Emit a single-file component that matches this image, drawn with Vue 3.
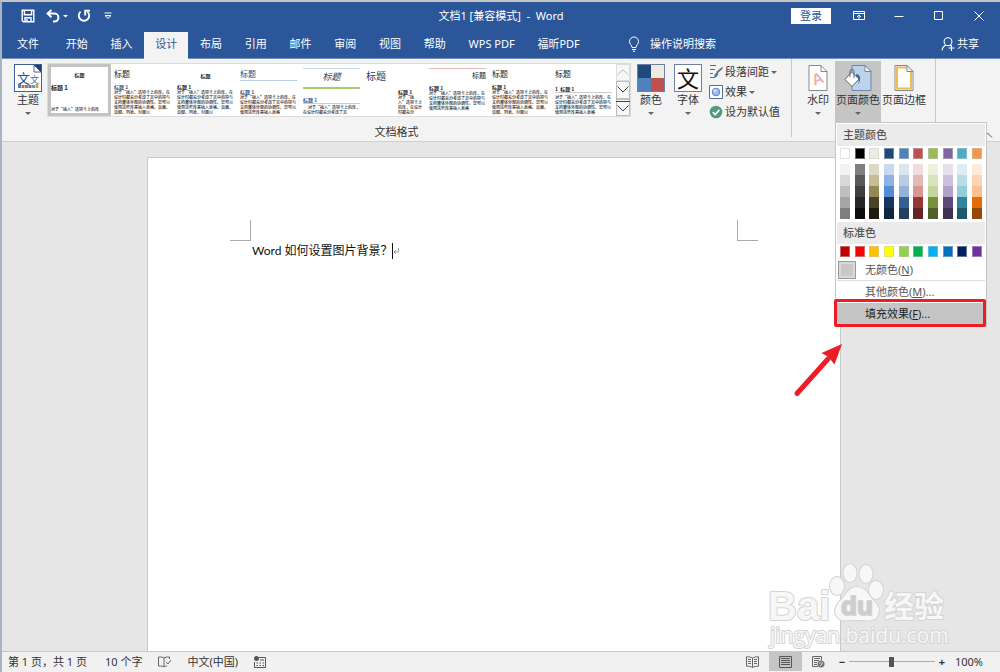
<script setup>
import { ref } from 'vue'

const tabs = ['文件', '开始', '插入', '设计', '布局', '引用', '邮件', '审阅', '视图', '帮助', 'WPS PDF', '福昕PDF']
const activeTab = ref('设计')
const zoom = ref(50)

const sample = '对于“插入”选项卡上的库，在设计时都充分考虑了其中的项与文档整体外观的协调性。您可以使用这些库来插入表格、页眉、页脚、列表、封面以及其他文档构建基块。'

// Document styles shown in the gallery, length is how much of the sample fits
const formats = [
  { name: 'current', heading: '标题 1', length: 12 },
  { name: 'office', heading: '标题 1', length: 65 },
  { name: 'classic', heading: '标题 1', length: 65 },
  { name: 'lines', heading: '标题 1', length: 52 },
  { name: 'centered', heading: '标题 1', length: 24 },
  { name: 'casual', heading: '标题 1', length: 20 },
  { name: 'minimal', heading: '标题 1', length: 52 },
  { name: 'plain', heading: '标题 1', length: 65 },
  { name: 'numbered', heading: '1  标题 1', length: 52 }
]

// Theme colors: base color first, then the five shades
const themeColors = [
  { base: '#ffffff', shades: ['#f2f2f2', '#d8d8d8', '#bfbfbf', '#a5a5a5', '#7f7f7f'] },
  { base: '#000000', shades: ['#7f7f7f', '#595959', '#3f3f3f', '#262626', '#0c0c0c'] },
  { base: '#eeece1', shades: ['#ddd9c3', '#c4bd97', '#938953', '#494429', '#1d1b10'] },
  { base: '#1f497d', shades: ['#c6d9f0', '#8db3e2', '#548dd4', '#17365d', '#0f243e'] },
  { base: '#4f81bd', shades: ['#dbe5f1', '#b8cce4', '#95b3d7', '#366092', '#244061'] },
  { base: '#c0504d', shades: ['#f2dcdb', '#e5b9b7', '#d99694', '#953734', '#632423'] },
  { base: '#9bbb59', shades: ['#ebf1dd', '#d7e3bc', '#c3d69b', '#76923c', '#4f6128'] },
  { base: '#8064a2', shades: ['#e5e0ec', '#ccc1d9', '#b2a2c7', '#5f497a', '#3f3151'] },
  { base: '#4bacc6', shades: ['#dbeef3', '#b7dde8', '#92cddc', '#31859b', '#205867'] },
  { base: '#f79646', shades: ['#fdeada', '#fbd5b5', '#fac08f', '#e36c09', '#974806'] }
]

const standardColors = ['#c00000', '#ff0000', '#ffc000', '#ffff00', '#92d050', '#00b050', '#00b0f0', '#0070c0', '#002060', '#7030a0']
</script>

<template>
  <div class="window">
    <header class="top">
      <div class="titlebar">
        <div class="quick">
          <button class="q-save" aria-label="保存">
            <svg width="14" height="14" viewBox="0 0 14 14" fill="none" stroke="#fff" stroke-width="1.4">
              <path d="M1.2 1.2h11.6v11.6H2.4L1.2 11.6z" />
              <path d="M3.4 1.5v4.2h7.2V1.5M4 12.6V8.8h6v3.8" />
              <path d="M6 10v2.6" />
            </svg>
          </button>
          <button class="q-undo" aria-label="撤消">
            <svg width="22" height="14" viewBox="0 0 22 14" fill="none" stroke="#fff" stroke-width="2">
              <path d="M5.4 1L1.6 4.6l3.8 3.6M2 4.6h6.400a4 4 0 0 1 0 8H7" />
              <path d="M17 6h5l-2.500 2.600z" fill="#fff" stroke="none" />
            </svg>
          </button>
          <button class="q-redo" aria-label="重复">
            <svg width="14" height="14" viewBox="0 0 14 14" fill="none" stroke="#fff" stroke-width="1.9">
              <path d="M3.6 2.6a5.2 5.2 0 1 0 6.8 0" />
              <path d="M8.200 6.400V1.600h4.800" />
            </svg>
          </button>
          <button class="q-more" aria-label="自定义快速访问工具栏">
            <svg width="8" height="8" viewBox="0 0 8 8" fill="none" stroke="#fff" stroke-width="1">
              <path d="M.5 1h7M1 3.600l3 2.800 3-2.800z" />
            </svg>
          </button>
        </div>
        <h1 class="title">文档1 [兼容模式]&nbsp; -&nbsp; Word</h1>
        <div class="controls">
          <button class="login">登录</button>
          <button class="control" aria-label="功能区显示选项">
            <svg width="12" height="10" viewBox="0 0 12 10" fill="none" stroke="#fff">
              <path d="M.5.5h11v8H.5zM.5 2.500h11M6 8V4M4 6l2-2 2 2" />
            </svg>
          </button>
          <button class="control" aria-label="最小化">
            <svg width="10" height="10" viewBox="0 0 10 10" stroke="#fff"><path d="M.5 5.500h9" /></svg>
          </button>
          <button class="control" aria-label="最大化">
            <svg width="10" height="10" viewBox="0 0 10 10" fill="none" stroke="#fff"><path d="M.5.5h8v8h-8z" /></svg>
          </button>
          <button class="control" aria-label="关闭">
            <svg width="10" height="10" viewBox="0 0 10 10" stroke="#fff"><path d="M.5.5l9 9M9.500.5l-9 9" /></svg>
          </button>
        </div>
      </div>
      <div class="tabbar">
        <nav class="tabs">
          <button
            v-for="tab in tabs"
            :key="tab"
            class="tab"
            :class="{ active: tab === activeTab }"
            @click="activeTab = tab"
          >{{ tab }}</button>
        </nav>
        <button class="tell-me">
          <svg width="12" height="16" viewBox="0 0 12 16" fill="none" stroke="#fff">
            <path d="M4 11.500C4 9 1.500 8.500 1.500 5.500a4.500 4.500 0 0 1 9 0C10.500 8.500 8 9 8 11.500z" />
            <path d="M4 13.500h4M5 15.300h2" />
          </svg>
          操作说明搜索
        </button>
        <button class="share">
          <svg width="14" height="14" viewBox="0 0 14 14" fill="none" stroke="#fff" stroke-width="1.1">
            <circle cx="7" cy="4.700" r="3.900" />
            <path d="M1 13.500c.3-3 1.700-4.500 4-5.300M9 8.200l1 .8M7.500 11h6M10.500 8v6" />
          </svg>
          共享
        </button>
      </div>
    </header>

    <section class="ribbon">
      <div class="group format-group">
        <div class="row">
          <button class="big theme">
            <span class="box theme-icon">
              <svg width="26" height="26" viewBox="0 0 26 26">
                <path d="M19 0h7v7z" fill="#1f3f7a" />
                <path d="M19 0v7h7z" fill="#fff" stroke="#1f3f7a" stroke-width=".8" />
                <text x="2" y="18" class="theme-a">文</text>
                <text x="15" y="18" class="theme-b">文</text>
                <path d="M3 19h3v4H3z" fill="#4f81bd" />
                <path d="M6.500 20h3v3h-3z" fill="#e0632a" />
                <path d="M10 20h3v3h-3z" fill="#68a04a" />
                <path d="M13.500 20h3v3h-3z" fill="#8b5ba8" />
                <path d="M17 20h3v3h-3z" fill="#4bacc6" />
                <path d="M20.500 19h3v4h-3z" fill="#e89a3a" />
              </svg>
            </span>
            <span>主题</span>
            <i class="caret"></i>
          </button>
          <div class="gallery">
            <button v-for="f in formats" :key="f.name" class="thumb" :class="f.name">
              <span class="preview">
                <span class="t-title">标题</span>
                <span class="t-heading">{{ f.heading }}</span>
                <span class="t-body">{{ sample.slice(0, f.length) }}</span>
              </span>
            </button>
            <div class="scroller">
              <button class="dim" aria-label="上一行">
                <svg width="12" height="7" viewBox="0 0 12 7" fill="none" stroke="#b8b8b8"><path d="M.5 6L6 .8 11.500 6" /></svg>
              </button>
              <button aria-label="下一行">
                <svg width="12" height="7" viewBox="0 0 12 7" fill="none" stroke="#444"><path d="M.5.5L6 6 11.500.5" /></svg>
              </button>
              <button aria-label="其他">
                <svg width="14" height="12" viewBox="0 0 14 12" fill="none" stroke="#444"><path d="M0 .5h14M1.500 4.500L7 10l5.500-5.500" /></svg>
              </button>
            </div>
          </div>
          <button class="big colors">
            <span class="box color-icon"><b></b><b></b><b></b><b></b></span>
            <span>颜色</span>
            <i class="caret"></i>
          </button>
          <button class="big fonts">
            <span class="box font-icon">文</span>
            <span>字体</span>
            <i class="caret"></i>
          </button>
          <div class="options">
            <button>
              <svg width="14" height="14" viewBox="0 0 14 14" fill="none">
                <path d="M1 .5h6M1 4.500h5M1 8.500h3M1 12.500h4" stroke="#666" />
                <path d="M13.500 1.500v2.500L8.500 8.500 7 7z" fill="#777" />
                <path d="M8.500 7.500c1.500 1.500.5 4-4 6 1-1 .5-2 1-3.500s1.500-2.500 3-2.500z" fill="#3f7ab8" />
              </svg>
              段落间距<i class="caret"></i>
            </button>
            <button>
              <svg width="14" height="14" viewBox="0 0 14 14">
                <path d="M.5.5h13v13H.5z" fill="#fff" stroke="#536c9c" />
                <circle cx="7" cy="7" r="3.800" fill="#9dbdf0" stroke="#5a83c8" />
                <circle cx="6" cy="5.500" r="1.600" fill="#d3e2fb" />
              </svg>
              效果<i class="caret"></i>
            </button>
            <button>
              <svg width="14" height="14" viewBox="0 0 14 14" fill="none">
                <circle cx="7" cy="7" r="6.300" fill="#4f9a80" />
                <path d="M3.800 7.200l2.400 2.300 4.200-4.700" stroke="#fff" stroke-width="1.800" />
              </svg>
              设为默认值
            </button>
          </div>
        </div>
        <div class="group-label">文档格式</div>
      </div>

      <div class="group page-group">
        <button class="big watermark-button">
          <span class="box bare">
            <svg width="20" height="26" viewBox="0 0 20 26" fill="none">
              <path d="M1 .5h12l6 6v19H1z" fill="#fff" stroke="#888" />
              <path d="M13 .5v6h6" stroke="#888" />
              <text x="4" y="19" transform="rotate(-20 10 14)" class="mark-a">A</text>
            </svg>
          </span>
          <span>水印</span>
          <i class="caret"></i>
        </button>
        <div class="page-color">
          <button class="big pressed">
            <span class="box bare">
              <svg width="28" height="26" viewBox="0 0 28 26" fill="none">
                <path d="M8 .5h13l6 6v19H8z" fill="#bdd3ec" stroke="#6f87a6" />
                <path d="M21 .5v6h6z" fill="#fff" stroke="#6f87a6" />
                <path d="M12 9c4.500 0 5.500 5 2.500 10 .5-4-.5-6-2.500-7z" fill="#3b73b5" />
                <path d="M7.500 7L15 14l-7 7.500L1 14.500z" fill="#fff" stroke="#666" />
                <path d="M6 12V6.500a2 2 0 0 1 4 0V13" stroke="#666" />
              </svg>
            </span>
            <span>页面颜色</span>
            <i class="caret"></i>
          </button>

          <div class="menu">
            <h2>主题颜色</h2>
            <div class="swatches bases">
              <button
                v-for="c in themeColors"
                :key="c.base"
                :aria-label="c.base"
                :style="{ backgroundColor: c.base }"
              ></button>
            </div>
            <div class="swatches shades">
              <div v-for="c in themeColors" :key="c.base" class="shade-column">
                <button v-for="s in c.shades" :key="s" :aria-label="s" :style="{ backgroundColor: s }"></button>
              </div>
            </div>
            <h2>标准色</h2>
            <div class="swatches standard">
              <button v-for="c in standardColors" :key="c" :aria-label="c" :style="{ backgroundColor: c }"></button>
            </div>
            <button class="item none"><i class="none-box"></i>无颜色(<u>N</u>)</button>
            <button class="item">其他颜色(<u>M</u>)...</button>
            <button class="item fill">填充效果(<u>F</u>)...</button>
            <div class="callout"></div>
            <svg class="arrow" width="50" height="56" viewBox="0 0 50 56">
              <path d="M4 51.500L35 17" stroke="#ee1c25" stroke-width="5" stroke-linecap="round" />
              <path d="M49 2L28.500 11 35.500 15 41.500 22.500z" fill="#ee1c25" />
            </svg>
          </div>
        </div>
        <button class="big">
          <span class="box bare">
            <svg width="20" height="26" viewBox="0 0 20 26" fill="none">
              <path d="M1 .5h12l6 6v19H1z" fill="#fff" stroke="#888" />
              <path d="M3 2.500h9.500l4.500 5v16H3z" stroke="#f0b95c" stroke-width="2" />
              <path d="M13 .5v6h6z" fill="#fff" stroke="#888" />
            </svg>
          </span>
          <span>页面边框</span>
        </button>
      </div>
      <button class="collapse" aria-label="折叠功能区">
        <svg width="10" height="8" viewBox="0 0 10 8" fill="none" stroke="#555"><path d="M0 6.500L4.500 2 9 6.500" /></svg>
      </button>
    </section>

    <main class="workspace">
      <article class="page">
        <div class="corners"><i class="corner left"></i><i class="corner right"></i></div>
        <p class="line">Word 如何设置图片背景？<i class="cursor"></i><svg width="6" height="8" viewBox="0 0 6 8" fill="none" stroke="#888" stroke-width=".8"><path d="M5.500 1v4H1M3 3L1 5l2 2" /></svg></p>
      </article>
      <svg class="logo" width="184" height="86" viewBox="0 0 184 86">
        <g class="shape">
          <ellipse cx="71" cy="23" rx="7" ry="9" />
          <ellipse cx="84" cy="10" rx="6.500" ry="9" />
          <ellipse cx="100" cy="11" rx="6.500" ry="9" />
          <ellipse cx="110" cy="27" rx="7" ry="9" />
          <path d="M91 24c8 0 11 7 16 13 6 6 8 11 4 17-4 5-11 3-20 3s-17 2-20-3c-4-6-1-12 4-17 5-5 8-13 16-13z" />
        </g>
        <text x="2" y="57" class="logo-bai">Bai</text>
        <text x="75" y="52" class="logo-du">du</text>
        <text x="118" y="54" class="logo-cn">经验</text>
        <text x="4" y="80" class="logo-url">jingyan.baidu.com</text>
      </svg>
    </main>

    <footer class="status">
      <span class="s-page">第 1 页，共 1 页</span>
      <span class="s-words">10 个字</span>
      <svg class="s-proof" width="13" height="12" viewBox="0 0 13 12" fill="none" stroke="#666">
        <path d="M6 2v9M6 2C5 1 3 1 .5 1v9c2.500 0 4.500 0 5.500 1 1-1 2-1 3-1M6 2c1-1 3-1 5.500-1v2M8 6l2 2 3-4" />
      </svg>
      <span class="s-lang">中文(中国)</span>
      <svg class="s-macro" width="12" height="12" viewBox="0 0 12 12" fill="none" stroke="#555">
        <path d="M5 1.500h6.500v10H.5V6M2.500 7h1.500M5.500 7h1.500M8.500 7h1.500M2.500 9.500h1.500M5.500 9.500h1.500M8.500 9.500h1.500M6 4h4" />
        <circle cx="2.500" cy="2.500" r="2.500" fill="#555" stroke="none" />
      </svg>
      <div class="views">
        <button aria-label="阅读视图">
          <svg width="13" height="12" viewBox="0 0 13 12" fill="none" stroke="#666">
            <path d="M6.500 2v9.500M6.500 2C5 1 3 .8.5.8v9.400c2.500 0 4.500.3 6 1.300 1.500-1 3.500-1.300 6-1.300V.8c-2.500 0-4.500.2-6 1.200M2 3.500h3M2 5.500h3M2 7.500h3M8 3.500h3M8 5.500h3M8 7.500h3" />
          </svg>
        </button>
        <button class="on" aria-label="页面视图">
          <svg width="13" height="12" viewBox="0 0 13 12" fill="none" stroke="#555">
            <path d="M.5.5h12v11H.5zM2 2.500h9M2 4.500h9M2 6.500h9M2 8.500h9" />
          </svg>
        </button>
        <button aria-label="Web 版式视图">
          <svg width="13" height="12" viewBox="0 0 13 12" fill="none" stroke="#666">
            <path d="M6 10.500H.5V.5h9v4M2 2.500h6M2 4.500h5M2 6.500h3M2 8.500h3" />
            <circle cx="9" cy="8" r="3.500" fill="#777" stroke="none" />
            <path d="M7 7c2-1 2 1 4 0M8 10l2-2" stroke="#eee" stroke-width=".8" />
          </svg>
        </button>
      </div>
      <div class="zoom">
        <button aria-label="缩小">−</button>
        <input v-model="zoom" type="range" min="0" max="100" aria-label="显示比例" />
        <button aria-label="放大">+</button>
        <span>100%</span>
      </div>
    </footer>
  </div>
</template>

<style>
body {
  margin: 0;
}
</style>

<style scoped>
.window {
  display: flex;
  flex-direction: column;
  box-sizing: border-box;
  min-height: 100vh;
  border-top: 2px solid #c4c4c4;
  border-left: 2px solid #a9b3c2;
  background: #e6e6e6;
  color: #333;
  font-family: "Noto Sans", "Noto Sans CJK SC", sans-serif;
  font-size: 11px;
  line-height: 16px;
}

button {
  margin: 0;
  padding: 0;
  border: 0;
  background: none;
  color: inherit;
  font: inherit;
  white-space: nowrap;
}

svg {
  display: block;
  flex: none;
}

/* Title bar and tabs */
.top {
  background: #2b579a;
  color: #fff;
}

.titlebar {
  display: grid;
  grid-template-columns: 1fr auto 1fr;
  align-items: center;
  height: 28px;
}

.quick {
  display: flex;
  align-items: center;
  gap: 9px;
  padding-left: 19px;
}

.q-undo {
  margin-left: 2px;
}

.q-more {
  margin-left: 4px;
}

.title {
  margin: 0;
  font-size: 11px;
  font-weight: 400;
}

.controls {
  display: flex;
  justify-content: flex-end;
  align-items: center;
  padding-right: 1px;
}

.login {
  width: 40px;
  margin-right: 8px;
  background: #fff;
  color: #2b579a;
}

.control {
  display: flex;
  justify-content: center;
  width: 40px;
}

.tabbar {
  display: flex;
  align-items: stretch;
  height: 28px;
  padding-left: 4px;
  border-bottom: 1px solid #7592c0;
}

.tabs {
  display: flex;
  justify-content: space-between;
  width: 585px;
}

.tab {
  height: 27px;
  margin-top: 2px;
  padding: 0 11px 4px;
}

.tab:first-child {
  margin-right: 4px;
}

.tab.active {
  height: 28px;
  padding-bottom: 5px;
  background: #f3f3f3;
  color: #2b579a;
}

.tell-me,
.share {
  display: flex;
  align-items: center;
  gap: 10px;
  margin-left: 37px;
}

.share {
  gap: 2px;
  margin-left: auto;
  margin-right: 21px;
}

/* Ribbon */
.ribbon {
  display: flex;
  height: 82px;
  border-bottom: 1px solid #d0d0d0;
  background: #f3f3f3;
}

.group {
  display: flex;
  box-sizing: border-box;
  padding-top: 2px;
}

.format-group {
  flex-direction: column;
  width: 790px;
  height: 78px;
  border-right: 1px solid #c6c6c6;
}

.row {
  display: flex;
}

.big {
  display: flex;
  flex-direction: column;
  align-items: center;
  box-sizing: border-box;
  height: 61px;
  padding-top: 3px;
}

.box {
  display: flex;
  justify-content: center;
  align-items: center;
  box-sizing: border-box;
  width: 28px;
  height: 28px;
  border: 1px solid #6d7fa3;
  background: #fff;
}

.box.bare {
  border: 0;
  background: none;
}

.caret {
  width: 0;
  margin-top: 4px;
  border: 3px solid transparent;
  border-top: 3px solid #666;
  border-bottom: 0;
}

.theme {
  width: 28px;
  margin-left: 12px;
  margin-right: 5px;
}

.theme-icon {
  border: 1px solid #3f5e96;
}

.theme-a {
  fill: #2b4f8f;
  font-size: 13px;
}

.theme-b {
  fill: #3b6fb5;
  font-size: 9px;
}

.mark-a {
  fill: #eeb3a8;
  font: 700 16px "Liberation Sans", sans-serif;
}

.gallery {
  display: flex;
  box-sizing: border-box;
  width: 584px;
  height: 54px;
  margin-top: 2px;
  border: 1px solid #dcdcdc;
  background: #fff;
}

.thumb {
  box-sizing: border-box;
  width: 63px;
  height: 52px;
  padding: 4px 3px 0;
  color: #222;
  font-family: "Noto Sans CJK SC", sans-serif;
  text-align: left;
  white-space: normal;
}

.thumb.current {
  padding: 0;
  border: 3px solid #c3c3c3;
}

.preview {
  display: block;
  height: 48px;
}

.current .preview {
  height: 46px;
}

.t-title,
.t-heading,
.t-body {
  display: block;
}

.t-title {
  font-size: 8px;
  line-height: 12px;
}

.t-heading {
  margin-top: 4px;
  font-size: 5px;
  font-weight: 700;
  line-height: 6px;
  white-space: pre;
}

.t-body {
  font-size: 4px;
  font-weight: 500;
  line-height: 5px;
}

.current .t-title,
.classic .t-title {
  font-size: 5px;
  font-weight: 700;
  line-height: 16px;
  text-align: center;
}

.current .t-heading {
  margin-top: 0;
  margin-bottom: 14px;
  font-size: 6px;
  line-height: 10px;
}

.classic .t-heading {
  margin-top: 0;
}

.office .t-heading,
.lines .t-heading,
.centered .t-heading {
  color: #345a8a;
}

.lines .t-title {
  border-bottom: 1px solid #b9d0ea;
  color: #1f497d;
}

.lines .t-heading {
  margin-top: 8px;
}

.centered .t-title {
  padding: 1px 0 3px;
  border-top: 1px solid #c5d8ec;
  border-bottom: 2px solid #a6cc6a;
  color: #1f3f66;
  font-size: 9px;
  font-style: italic;
  line-height: 14px;
  text-align: center;
}

.centered .t-heading {
  margin-top: 8px;
  border-bottom: 1px solid #b9d0ea;
}

.centered .t-body {
  padding-top: 1px;
  text-indent: 5px;
}

.casual .t-title {
  color: #1f3f66;
  font-size: 10px;
  line-height: 16px;
}

.casual .t-heading {
  margin-top: 5px;
  margin-left: 32px;
}

.casual .t-body {
  margin-left: 32px;
}

.minimal .t-title {
  border-top: 1px solid #eab8b4;
  font-size: 7px;
  text-align: right;
}

.numbered .t-heading {
  margin-top: 6px;
  margin-bottom: 2px;
  border-bottom: 1px solid #ccc;
}

.scroller {
  display: flex;
  flex-direction: column;
  width: 14px;
  margin-left: auto;
}

.scroller button {
  display: flex;
  flex: 1;
  justify-content: center;
  align-items: center;
  border: 1px solid #bdbdbd;
  background: #f7f7f7;
}

.scroller .dim {
  border-color: #dedede;
}

.colors,
.fonts {
  width: 28px;
  margin-left: 6px;
}

.fonts {
  margin-left: 9px;
}

.color-icon {
  display: grid;
  grid-template-columns: 1fr 1fr;
  grid-template-rows: 1fr 1fr;
  place-items: stretch;
}

.color-icon b:nth-child(1) {
  background: #1f497d;
}

.color-icon b:nth-child(2) {
  background: #eeece1;
}

.color-icon b:nth-child(3) {
  background: #4f81bd;
}

.color-icon b:nth-child(4) {
  background: #c0504d;
}

.font-icon {
  color: #111;
  font-size: 22px;
  line-height: 24px;
}

.options {
  display: flex;
  flex-direction: column;
  margin-top: 1px;
  margin-left: 7px;
}

.options button {
  display: flex;
  align-items: center;
  gap: 2px;
  height: 20px;
}

.options .caret {
  margin-top: 0;
}

.group-label {
  margin-top: 2px;
  text-align: center;
}

.page-group {
  box-sizing: border-box;
  height: 63px;
  padding-left: 9px;
  padding-right: 8px;
  border-right: 1px solid #c6c6c6;
}

.watermark-button {
  width: 34px;
}

.page-color {
  position: relative;
}

.pressed {
  width: 46px;
  background: #c5c5c5;
}

.page-group > .big:last-child {
  width: 46px;
}

.collapse {
  display: flex;
  align-self: flex-end;
  margin-left: auto;
  margin-right: 7px;
  margin-bottom: 2px;
}

/* Page color menu */
.menu {
  position: absolute;
  z-index: 2;
  top: 61px;
  left: 0;
  box-sizing: border-box;
  width: 152px;
  padding: 1px;
  border: 1px solid #c6c6c6;
  background: #fff;
  color: #555;
}

.menu h2 {
  margin: 0;
  padding: 3px 6px;
  background: #ebebeb;
  font-size: 11px;
  font-weight: 500;
}

.swatches {
  display: grid;
  grid-template-columns: repeat(10, 10px);
  justify-content: space-between;
  padding: 2px 3px;
}

.swatches button {
  display: block;
  box-sizing: border-box;
  width: 10px;
  height: 11px;
}

.bases button,
.standard button {
  border: 1px solid rgba(200, 200, 200, 0.5);
}

.shades {
  padding: 3px;
}

.item {
  display: block;
  box-sizing: border-box;
  width: 100%;
  height: 22px;
  padding: 0 0 0 28px;
  text-align: left;
}

.item.none {
  display: flex;
  align-items: center;
  padding: 0 0 0 1px;
  border-bottom: 1px solid #ddd;
}

.none-box {
  box-sizing: border-box;
  width: 18px;
  height: 18px;
  margin-right: 9px;
  border: 1px solid #999;
  background: #c8c8c8;
  box-shadow: inset 0 0 0 2px #d9d9d9;
}

.item.fill {
  background: #c5c5c5;
  color: #222;
}

.callout {
  position: absolute;
  right: 0;
  bottom: -1px;
  left: -2px;
  height: 22px;
  border: 3px solid #ee1c25;
  border-radius: 2px;
}

.arrow {
  position: absolute;
  top: 100%;
  left: -43px;
  margin-top: 16px;
}

/* Document area */
.workspace {
  position: relative;
  display: flex;
  flex: 1;
  padding: 15px 159px 0 145px;
}

.page {
  flex: 1;
  padding-top: 62px;
  border: 1px solid #c9c9c9;
  border-bottom: 0;
  background: #fff;
}

.corners {
  display: flex;
  justify-content: space-between;
  padding: 0 82px;
}

.corner {
  width: 20px;
  height: 20px;
  border-bottom: 1px solid #aaa;
}

.corner.left {
  border-right: 1px solid #aaa;
}

.corner.right {
  border-left: 1px solid #aaa;
}

.line {
  display: flex;
  align-items: center;
  margin: 2px 0 0;
  padding-left: 104px;
  color: #111;
  font-family: Lato, "Noto Sans CJK SC", sans-serif;
  font-size: 12px;
  white-space: nowrap;
}

.cursor {
  width: 1px;
  height: 16px;
  background: #111;
}

.logo {
  position: absolute;
  right: 50px;
  bottom: 2px;
  overflow: visible;
}

.shape,
.logo text {
  fill: #f7f7f7;
  stroke: #d4d4d4;
  stroke-width: 2px;
  stroke-linejoin: round;
  paint-order: stroke;
}

.logo .logo-bai {
  font: 700 40px "Liberation Sans", sans-serif;
}

.logo .logo-du {
  fill: #cdcdcd;
  font: 700 26px "Liberation Sans", sans-serif;
}

.logo .logo-cn {
  font: 700 30px "Noto Sans CJK SC", sans-serif;
}

.logo .logo-url {
  font: 400 21px "Open Sans", sans-serif;
}

/* Status bar */
.status {
  display: flex;
  align-items: center;
  height: 19px;
  padding-left: 6px;
  padding-bottom: 1px;
  border-top: 1px solid #c9c9c9;
  background: #f1f1f1;
  white-space: nowrap;
}

.s-words {
  margin-left: 18px;
}

.s-proof,
.s-lang,
.s-macro {
  margin-left: 16px;
}

.views {
  display: flex;
  align-self: stretch;
  margin-left: auto;
}

.views button {
  display: flex;
  justify-content: center;
  align-items: center;
  width: 33px;
}

.views .on {
  background: #c5c5c5;
}

.zoom {
  display: flex;
  align-items: center;
  margin-left: 2px;
  margin-right: 17px;
}

.zoom button {
  width: 10px;
  font-weight: 700;
}

.zoom span {
  margin-left: 8px;
}

input[type="range"] {
  width: 86px;
  height: 12px;
  margin: 0 2px;
  appearance: none;
  background: linear-gradient(#aaa, #aaa) center / 100% 1px no-repeat;
}

input[type="range"]::-webkit-slider-thumb {
  width: 5px;
  height: 10px;
  appearance: none;
  background: #555;
}
</style>
